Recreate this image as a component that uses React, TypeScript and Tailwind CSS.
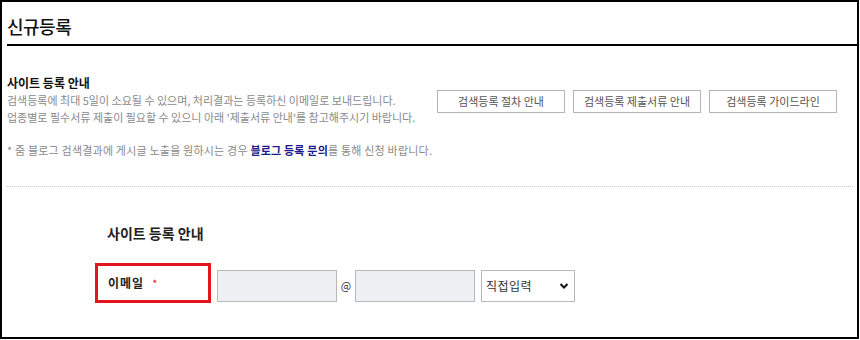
import React from 'react';

const font = { fontFamily: '"Noto Sans CJK KR", "Noto Sans", sans-serif' };

const guideButtons = ['검색등록 절차 안내', '검색등록 제출서류 안내', '검색등록 가이드라인'];

const App: React.FC = () => {
  return (
    <div className="w-[859px] h-[339px] border-2 border-black bg-white overflow-hidden" style={font}>
      <header className="ml-[5px] pt-[11px] pb-[5px] border-b-2 border-black">
        <h1 className="text-[18px] leading-[26px] font-medium text-[#111] tracking-[-0.5px]">신규등록</h1>
      </header>

      <section className="pl-[5px] pr-[20px]">
        <div className="flex items-center justify-between">
          <div className="pt-[29px]">
            <h2 className="text-[12px] leading-[16px] font-bold text-[#111]">사이트 등록 안내</h2>
            <p className="mt-[1px] text-[11px] leading-[17px] text-[#8a8a8a]">
              검색등록에 최대 5일이 소요될 수 있으며, 처리결과는 등록하신 이메일로 보내드립니다.
              <br />
              업종별로 필수서류 제출이 필요할 수 있으니 아래 '제출서류 안내'를 참고해주시기 바랍니다.
            </p>
          </div>
          <div className="flex gap-[8px] pt-[30px]">
            {guideButtons.map(label => (
              <button
                key={label}
                className="w-[128px] h-[23px] border border-[#b5b5b5] bg-white text-[11px] text-[#555]"
              >
                {label}
              </button>
            ))}
          </div>
        </div>
        <p className="mt-[16px] text-[11px] leading-[17px] text-[#8a8a8a] tracking-[0.2px]">
          * 줌 블로그 검색결과에 게시글 노출을 원하시는 경우{' '}
          <a className="font-bold text-[#1a1a8c]">블로그 등록 문의</a>를 통해 신청 바랍니다.
        </p>
      </section>

      <div className="mt-[27px] ml-[5px] mr-[4px] border-t border-dotted border-[#c8c8c8]" />

      <section className="pl-[93px]">
        <h3 className="mt-[36px] pl-[12px] text-[14px] leading-[20px] font-bold text-[#222]">사이트 등록 안내</h3>
        <div className="mt-[20px] flex items-end">
          <div className="w-[116px] h-[40px] border-[3px] border-[#e3141b] flex items-center pl-[10px]">
            <span className="text-[12px] font-bold text-[#222] tracking-[1px]">이메일</span>
            <span className="ml-[8px] text-[11px] text-[#e3141b]">*</span>
          </div>
          <input className="ml-[6px] mb-[1px] w-[120px] h-[32px] border border-[#b8b8b8] bg-[#eef1f4] outline-none" />
          <span className="mb-[10px] w-[18px] text-center text-[11px] text-[#333]">@</span>
          <input className="mb-[1px] w-[120px] h-[32px] border border-[#b8b8b8] bg-[#eef1f4] outline-none" />
          <div className="ml-[6px] mb-[1px] w-[94px] h-[32px] border border-[#b8b8b8] bg-white flex items-center justify-between pl-[4px] pr-[5px]">
            <span className="text-[12px] text-[#333] tracking-[0.5px]">직접입력</span>
            <svg width="10" height="8" viewBox="0 0 10 8">
              <path d="M1.5 2l3.5 3.5L8.5 2" fill="none" stroke="#111" strokeWidth="2" />
            </svg>
          </div>
        </div>
      </section>
    </div>
  );
};

export default App;
